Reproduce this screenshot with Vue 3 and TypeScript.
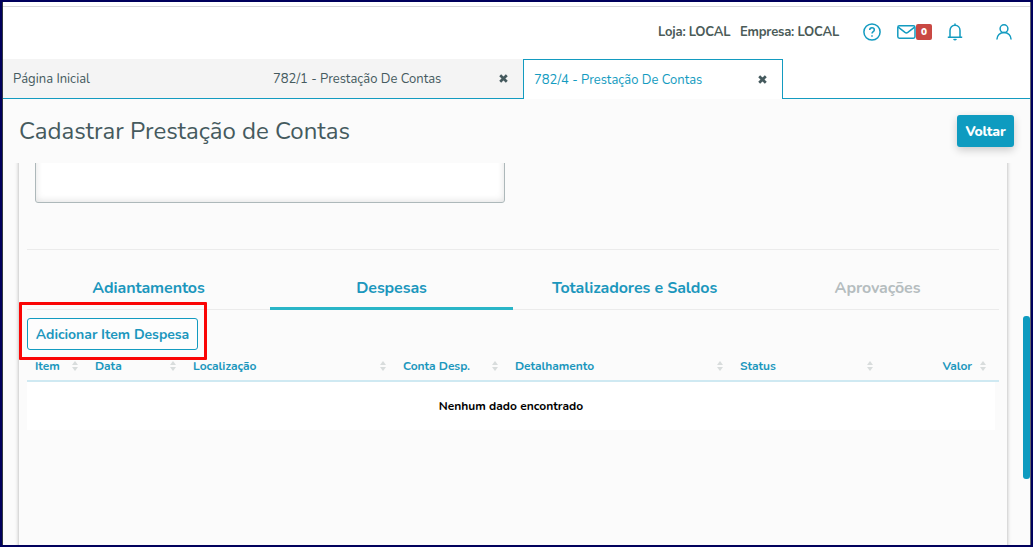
<script setup lang="ts">
interface SectionTab {
  label: string
  state: 'idle' | 'active' | 'disabled'
}

interface Column {
  key: string
  label: string
}

const sections: SectionTab[] = [
  { label: 'Adiantamentos', state: 'idle' },
  { label: 'Despesas', state: 'active' },
  { label: 'Totalizadores e Saldos', state: 'idle' },
  { label: 'Aprovações', state: 'disabled' },
]

const columns: Column[] = [
  { key: 'item', label: 'Item' },
  { key: 'data', label: 'Data' },
  { key: 'local', label: 'Localização' },
  { key: 'conta', label: 'Conta Desp.' },
  { key: 'detalhe', label: 'Detalhamento' },
  { key: 'status', label: 'Status' },
  { key: 'valor', label: 'Valor' },
]
</script>

<template>
  <div class="frame">
    <div class="window">
      <header class="topbar">
        <span class="info loja">Loja: LOCAL</span>
        <span class="info empresa">Empresa: LOCAL</span>
        <svg class="icon help" viewBox="0 0 18 18" width="18" height="18">
          <circle cx="9" cy="9" r="8.100" />
          <path d="M6.700 7.100c0-1.400 1-2.300 2.300-2.300s2.300.9 2.300 2.100c0 1.700-2.300 1.800-2.300 3.600" />
          <path d="M9 12.200v1.500" />
        </svg>
        <svg class="icon mail" viewBox="0 0 19 14" width="19" height="14">
          <rect x=".8" y=".8" width="17.200" height="12.400" rx="1.600" />
          <path d="M1.200 2.200l6.800 5.200q1.400 1 2.800 0l6.800-5.200" />
        </svg>
        <span class="badge">0</span>
        <svg class="icon bell" viewBox="0 0 16 18" width="16" height="18">
          <path d="M8 .6v1.600M.8 14.200h14.400M3 14.200V7.600c0-3.100 2.100-5.300 5-5.300s5 2.200 5 5.300v6.600" />
          <path d="M6.600 16q1.400 1.500 2.800 0" />
        </svg>
        <svg class="icon user" viewBox="0 0 16 16" width="16" height="16">
          <circle cx="8" cy="4.700" r="3.900" />
          <path d="M.9 15.600c0-4.100 3-7 7.100-7s7.100 2.900 7.100 7" />
        </svg>
      </header>

      <nav class="pages">
        <div class="page home"><span>Página Inicial</span></div>
        <div class="page second">
          <span>782/1 - Prestação De Contas</span>
          <svg class="close" viewBox="0 0 9 9" width="9" height="9"><path d="M1.200 1.200l6.600 6.600M7.800 1.200l-6.600 6.600" /></svg>
        </div>
        <div class="page current">
          <span>782/4 - Prestação De Contas</span>
          <svg class="close" viewBox="0 0 9 9" width="9" height="9"><path d="M1.200 1.200l6.600 6.600M7.800 1.200l-6.600 6.600" /></svg>
        </div>
        <div class="page-rest"></div>
      </nav>

      <div class="title-row">
        <h1>Cadastrar Prestação de Contas</h1>
        <button class="back">Voltar</button>
      </div>

      <div class="viewport">
        <main class="card">
          <div class="field"></div>
          <div class="divider"></div>
          <div class="sections">
            <div v-for="s in sections" :key="s.label" class="section" :class="s.state">{{ s.label }}</div>
          </div>
          <div class="actions">
            <button class="add">Adicionar Item Despesa</button>
            <div class="highlight"></div>
          </div>
          <div class="thead">
            <div v-for="c in columns" :key="c.key" class="th" :class="'col-' + c.key">
              <span>{{ c.label }}</span>
              <svg viewBox="0 0 6 10" width="6" height="10"><path d="M3 0l3 4H0zM0 6h6L3 10z" /></svg>
            </div>
          </div>
          <div class="empty">Nenhum dado encontrado</div>
        </main>
        <div class="scroll-thumb"></div>
      </div>
    </div>
  </div>
</template>

<style>
html,
body {
  margin: 0;
  overflow: hidden;
}
</style>

<style scoped>
* {
  box-sizing: border-box;
}
.frame {
  width: 1033px;
  height: 547px;
  border: 2px solid #00005c;
  background: #fff;
  font-family: Nunito, Lato, sans-serif;
  color: #455a5e;
  white-space: nowrap;
}
.window {
  height: 543px;
  border-left: 1px solid #30363f;
  border-right: 1px solid #63656f;
  display: flex;
  flex-direction: column;
}
.topbar {
  flex: none;
  height: 53px;
  margin-top: 4px;
  border-top: 1px solid #dadada;
  display: flex;
  align-items: center;
  padding: 0 18px 2px 0;
  justify-content: flex-end;
}
.info {
  font-size: 13px;
  font-weight: 700;
  line-height: 18px;
  letter-spacing: -0.2px;
  color: #4b5b58;
}
.loja {
  width: 82px;
}
.empresa {
  width: 123px;
}
.icon {
  fill: none;
  stroke: #139bc0;
  stroke-width: 1.5;
}
.mail {
  margin-left: 16px;
}
.badge {
  width: 16px;
  height: 16px;
  border-radius: 2px;
  background: #c94843;
  color: #fff;
  font-size: 10px;
  font-weight: 900;
  line-height: 16px;
  text-align: center;
}
.bell {
  margin-left: 15px;
}
.user {
  margin-left: 33px;
}
.pages {
  flex: none;
  display: flex;
  height: 40px;
}
.page {
  display: flex;
  align-items: center;
  justify-content: space-between;
  width: 260px;
  height: 40px;
  padding: 0 15px 0 10px;
  background: #f4f4f4;
  border-bottom: 1px solid #139bc0;
  font-size: 13px;
}
.current {
  background: #fff;
  border: 1px solid #139bc0;
  border-bottom: 0;
  color: #139bc0;
}
.page-rest {
  flex: 1;
  border-bottom: 1px solid #139bc0;
}
.close {
  fill: none;
  stroke: #455a5e;
  stroke-width: 2.7;
}
.title-row {
  flex: none;
  display: flex;
  align-items: center;
  justify-content: space-between;
  height: 64px;
  padding: 0 16px;
  background: #fbfbfb;
}
h1 {
  margin: 0;
  font-size: 24px;
  line-height: 32px;
  font-weight: 400;
}
button {
  font-family: inherit;
  white-space: nowrap;
  padding: 0;
}
.back {
  width: 57px;
  height: 32px;
  border: 0;
  border-radius: 3px;
  background: #0e9bc0;
  color: #fff;
  font-size: 14px;
  font-weight: 800;
  letter-spacing: -0.2px;
  box-shadow: 0 3px 8px rgba(0, 0, 0, 0.2);
}
.viewport {
  flex: 1;
  min-height: 0;
  overflow: hidden;
  position: relative;
  display: flex;
  background: #fbfbfb;
  padding-left: 16px;
}
.card {
  width: 988px;
  height: 460px;
  margin-top: -20px;
  padding: 0 8px;
  background: #fbfbfb;
  box-shadow: 0 0 4px rgba(0, 0, 0, 0.32);
}
.field {
  width: 470px;
  height: 60px;
  margin-left: 8px;
  background: #fff;
  border: 1px solid #adb8ba;
  border-radius: 3px;
  box-shadow: inset 0 -1px 7px rgba(0, 0, 0, 0.12);
}
.divider {
  height: 1px;
  margin-top: 46px;
  background: #ebebeb;
}
.sections {
  display: grid;
  grid-template-columns: repeat(4, 1fr);
  height: 60px;
}
.section {
  height: 60px;
  padding-top: 27px;
  text-align: center;
  border-bottom: 1px solid #ebebeb;
  color: #1c97bd;
  font-size: 16px;
  font-weight: 700;
  line-height: 22px;
  letter-spacing: -0.1px;
}
.section.active {
  border-bottom: 3px solid #29b5c7;
}
.section.disabled {
  color: #b5bdbf;
}
.actions {
  position: relative;
  height: 40px;
  padding-top: 8px;
}
.add {
  display: block;
  width: 171px;
  height: 32px;
  border: 1px solid #139bc0;
  border-radius: 3px;
  background: #fdfdfd;
  color: #1c97bd;
  font-size: 14px;
  font-weight: 700;
  letter-spacing: -0.03px;
}
.highlight {
  position: absolute;
  left: -8px;
  top: -8px;
  width: 188px;
  height: 58px;
  border: 3px solid #fa0505;
  border-radius: 1px;
}
.thead {
  display: grid;
  grid-template-columns: 60px 98px 210px 112px 225px 150px 113px;
  height: 32px;
  border-bottom: 2px solid #cfe9f2;
}
.th {
  display: flex;
  align-items: center;
  justify-content: space-between;
  padding: 2px 9px 0 8px;
  color: #1c97bd;
  font-size: 12px;
  font-weight: 700;
  letter-spacing: -0.05px;
}
.th svg {
  fill: #d8dcdc;
}
.th.col-valor {
  justify-content: flex-end;
  gap: 8px;
}
.empty {
  width: 968px;
  height: 48px;
  background: #fff;
  color: #000;
  font-size: 12px;
  font-weight: 700;
  line-height: 48px;
  text-align: center;
}
.scroll-thumb {
  position: absolute;
  right: 0;
  top: 153px;
  width: 7px;
  height: 163px;
  border-radius: 3px;
  background: #0e9bc0;
}
</style>
